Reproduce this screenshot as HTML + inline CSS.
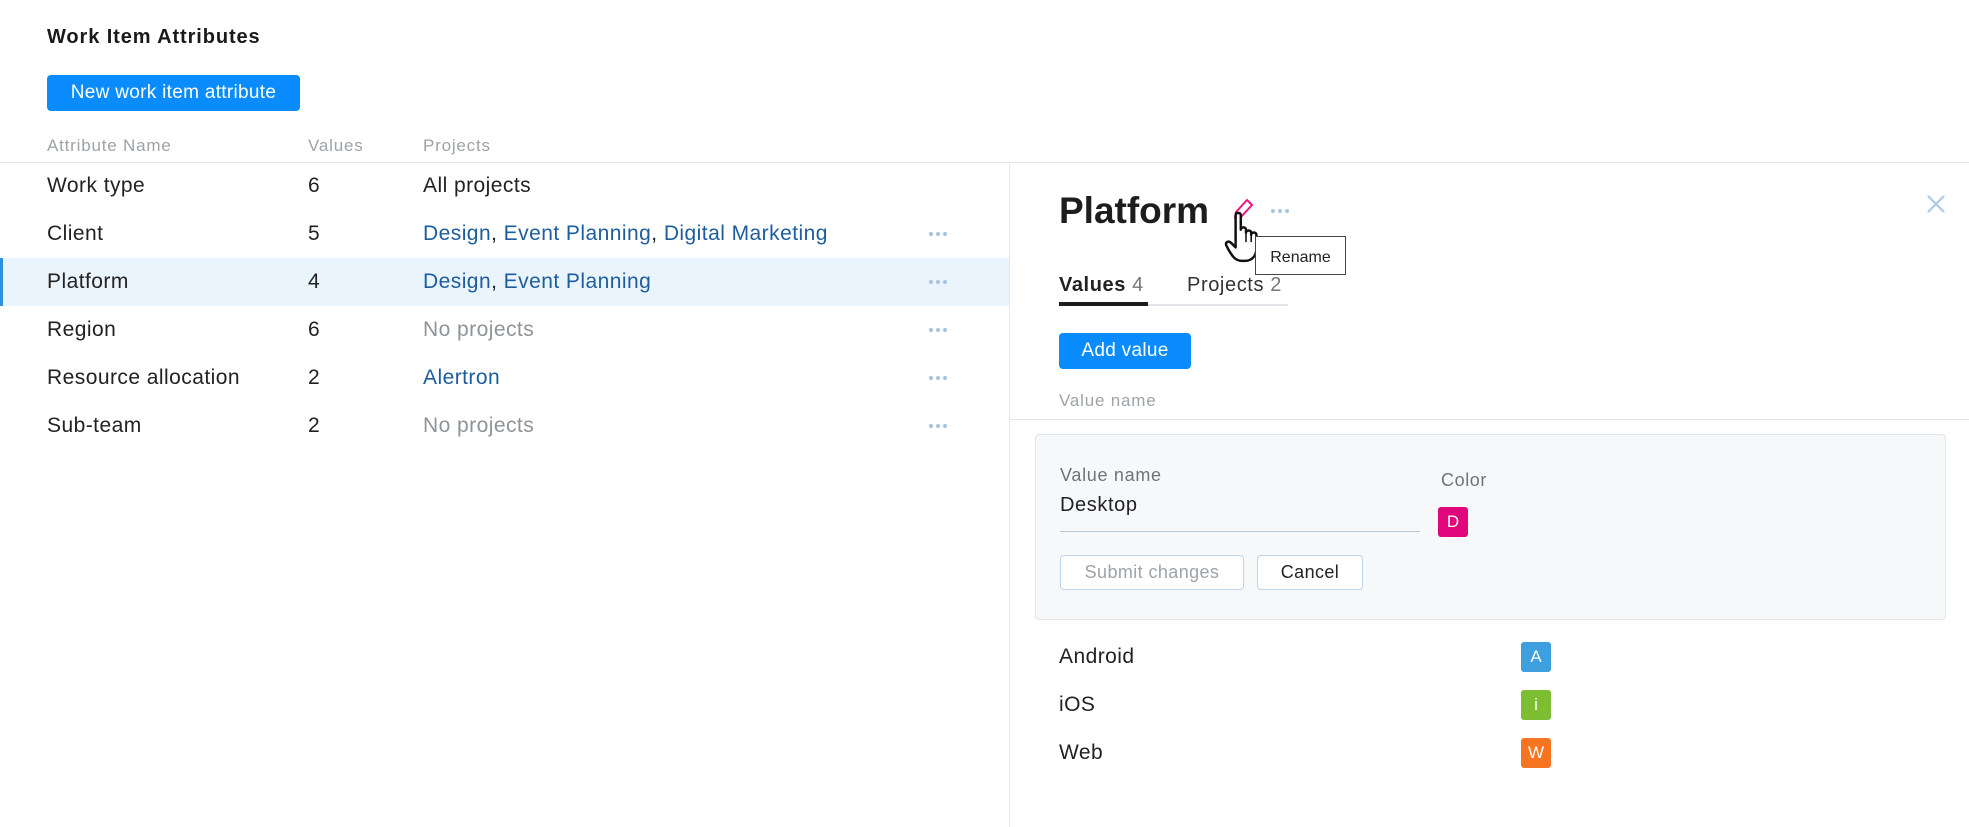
<!DOCTYPE html>
<html><head><meta charset="utf-8"><style>
*{margin:0;padding:0;box-sizing:border-box}
body{width:1969px;height:827px;background:#fff;font-family:"Liberation Sans",sans-serif;color:#222;position:relative;overflow:hidden}
.a{position:absolute;white-space:nowrap}
.t{font-size:21px;line-height:24px;transform:translateY(-12px);letter-spacing:0.45px}
.btn{position:absolute;background:#0a8cff;color:#fff;border-radius:4px;display:flex;align-items:center;justify-content:center;font-size:19px;letter-spacing:0.3px}
.hd{font-size:17px;color:#9ea3a8;line-height:20px;transform:translateY(-10px);letter-spacing:0.8px}
.lnk{color:#1e5d9c}
.gr{color:#8f9499}
.dots{position:absolute;width:20px;height:4px}
.dots i{position:absolute;top:0;width:4px;height:4px;border-radius:2px;background:#a9c3dc}
.badge{position:absolute;width:30px;height:30px;border-radius:3px;color:#fff;font-size:17px;display:flex;align-items:center;justify-content:center}
.ob{position:absolute;border:1.5px solid #bcd5ea;border-radius:4px;background:#fff;display:flex;align-items:center;justify-content:center;font-size:18px;letter-spacing:0.4px}
</style></head><body>
<div class="a" style="left:47px;top:26px;font-size:20px;font-weight:bold;color:#1a1a1a;letter-spacing:0.9px">Work Item Attributes</div>
<div class="btn" style="left:47px;top:75px;width:253px;height:36px">New work item attribute</div>
<div class="a hd" style="left:47px;top:146px">Attribute Name</div>
<div class="a hd" style="left:308px;top:146px">Values</div>
<div class="a hd" style="left:423px;top:146px">Projects</div>
<div class="a" style="left:0;top:162px;width:1969px;height:1px;background:#e1e6ea"></div>
<div class="a" style="left:1009px;top:163px;width:1px;height:664px;background:#e4e8ec"></div>
<div class="a" style="left:0;top:258px;width:1009px;height:48px;background:#eaf4fd;border-left:3px solid #2d8fe0"></div>

<div class="a t" style="left:47px;top:186px">Work type</div><div class="a t" style="left:308px;top:186px">6</div><div class="a t" style="left:423px;top:186px">All projects</div>
<div class="a t" style="left:47px;top:234px">Client</div><div class="a t" style="left:308px;top:234px">5</div><div class="a t lnk" style="left:423px;top:234px">Design<span style="color:#222">,</span> Event Planning<span style="color:#222">,</span> Digital Marketing</div>
<div class="a t" style="left:47px;top:282px">Platform</div><div class="a t" style="left:308px;top:282px">4</div><div class="a t lnk" style="left:423px;top:282px">Design<span style="color:#222">,</span> Event Planning</div>
<div class="a t" style="left:47px;top:330px">Region</div><div class="a t" style="left:308px;top:330px">6</div><div class="a t gr" style="left:423px;top:330px">No projects</div>
<div class="a t" style="left:47px;top:378px">Resource allocation</div><div class="a t" style="left:308px;top:378px">2</div><div class="a t lnk" style="left:423px;top:378px">Alertron</div>
<div class="a t" style="left:47px;top:426px">Sub-team</div><div class="a t" style="left:308px;top:426px">2</div><div class="a t gr" style="left:423px;top:426px">No projects</div>
<div class="dots" style="left:929px;top:232px"><i style="left:0"></i><i style="left:7px"></i><i style="left:14px"></i></div>
<div class="dots" style="left:929px;top:280px"><i style="left:0"></i><i style="left:7px"></i><i style="left:14px"></i></div>
<div class="dots" style="left:929px;top:328px"><i style="left:0"></i><i style="left:7px"></i><i style="left:14px"></i></div>
<div class="dots" style="left:929px;top:376px"><i style="left:0"></i><i style="left:7px"></i><i style="left:14px"></i></div>
<div class="dots" style="left:929px;top:424px"><i style="left:0"></i><i style="left:7px"></i><i style="left:14px"></i></div>

<div class="a" style="left:1059px;top:189px;font-size:37px;font-weight:bold;color:#1d1d1d;line-height:44px">Platform</div>
<svg class="a" style="left:1232px;top:197px" width="24" height="24" viewBox="0 0 24 24"><path d="M3 21 L4 15 L15 3 L20 8 L9 20 Z" fill="none" stroke="#f0147c" stroke-width="2" stroke-linejoin="round"/><path d="M3 21 L4 16 L8 20 Z" fill="#f0147c"/></svg>
<div class="dots" style="left:1271px;top:209px"><i style="left:0"></i><i style="left:7px"></i><i style="left:14px"></i></div>
<svg class="a" style="left:1224px;top:211px" width="44" height="54" viewBox="0 0 42 52"><path d="M11 4 C11 1 16 1 16 4 L16 18 C16 15 21 15 21 18 L21 21 C21 18 26 18 26 21 L26 23 C26 20 31 20 31 23 L31 36 C31 44 26 48 20 48 L17 48 C11 48 8 44 4 37 L2 33 C1 30 4 28 7 31 L11 35 Z" fill="#fff" stroke="#111" stroke-width="2.4" stroke-linejoin="round"/><path d="M21 21 L21 30 M26 23 L26 30" stroke="#111" stroke-width="1.5"/></svg>
<div class="a" style="left:1255px;top:236px;width:91px;height:39px;border:1px solid #444;background:#fff;font-size:16px;display:flex;align-items:center;justify-content:center;color:#222;padding-top:4px">Rename</div>

<svg class="a" style="left:1927px;top:195px" width="18" height="18" viewBox="0 0 18 18"><path d="M1 1 L17 17 M17 1 L1 17" stroke="#a9c8e4" stroke-width="2"/></svg>

<div class="a" style="left:1059px;top:272px;font-size:20px;line-height:26px;letter-spacing:0.6px"><b>Values</b> <span style="color:#777">4</span></div>
<div class="a" style="left:1187px;top:272px;font-size:20px;line-height:26px;color:#333;letter-spacing:0.6px">Projects <span style="color:#777">2</span></div>
<div class="a" style="left:1059px;top:304px;width:229px;height:2px;background:#e2e6ea"></div>
<div class="a" style="left:1059px;top:302px;width:89px;height:4px;background:#1d1d1d"></div>
<div class="btn" style="left:1059px;top:333px;width:132px;height:36px">Add value</div>
<div class="a hd" style="left:1059px;top:401px">Value name</div>
<div class="a" style="left:1010px;top:419px;width:959px;height:1px;background:#e1e6ea"></div>

<div class="a" style="left:1035px;top:434px;width:911px;height:186px;background:#f6f8fa;border:1px solid #e1e5ea;border-radius:4px"></div>
<div class="a" style="left:1060px;top:465px;font-size:18px;color:#6f7478;letter-spacing:0.7px">Value name</div>
<div class="a" style="left:1060px;top:494px;font-size:20px;color:#222;letter-spacing:0.6px">Desktop</div>
<div class="a" style="left:1060px;top:531px;width:360px;height:1px;background:#b9c8d6"></div>
<div class="a" style="left:1441px;top:470px;font-size:18px;color:#6f7478;letter-spacing:0.6px">Color</div>
<div class="badge" style="left:1438px;top:507px;background:#e0067c">D</div>
<div class="ob" style="left:1060px;top:555px;width:184px;height:35px;color:#9ea3a8">Submit changes</div>
<div class="ob" style="left:1257px;top:555px;width:106px;height:35px;color:#222">Cancel</div>

<div class="a t" style="left:1059px;top:657px">Android</div>
<div class="a t" style="left:1059px;top:705px">iOS</div>
<div class="a t" style="left:1059px;top:753px">Web</div>
<div class="badge" style="left:1521px;top:642px;background:#3d9fde">A</div>
<div class="badge" style="left:1521px;top:690px;background:#7dbd32">i</div>
<div class="badge" style="left:1521px;top:738px;background:#f77420">W</div>
</body></html>
